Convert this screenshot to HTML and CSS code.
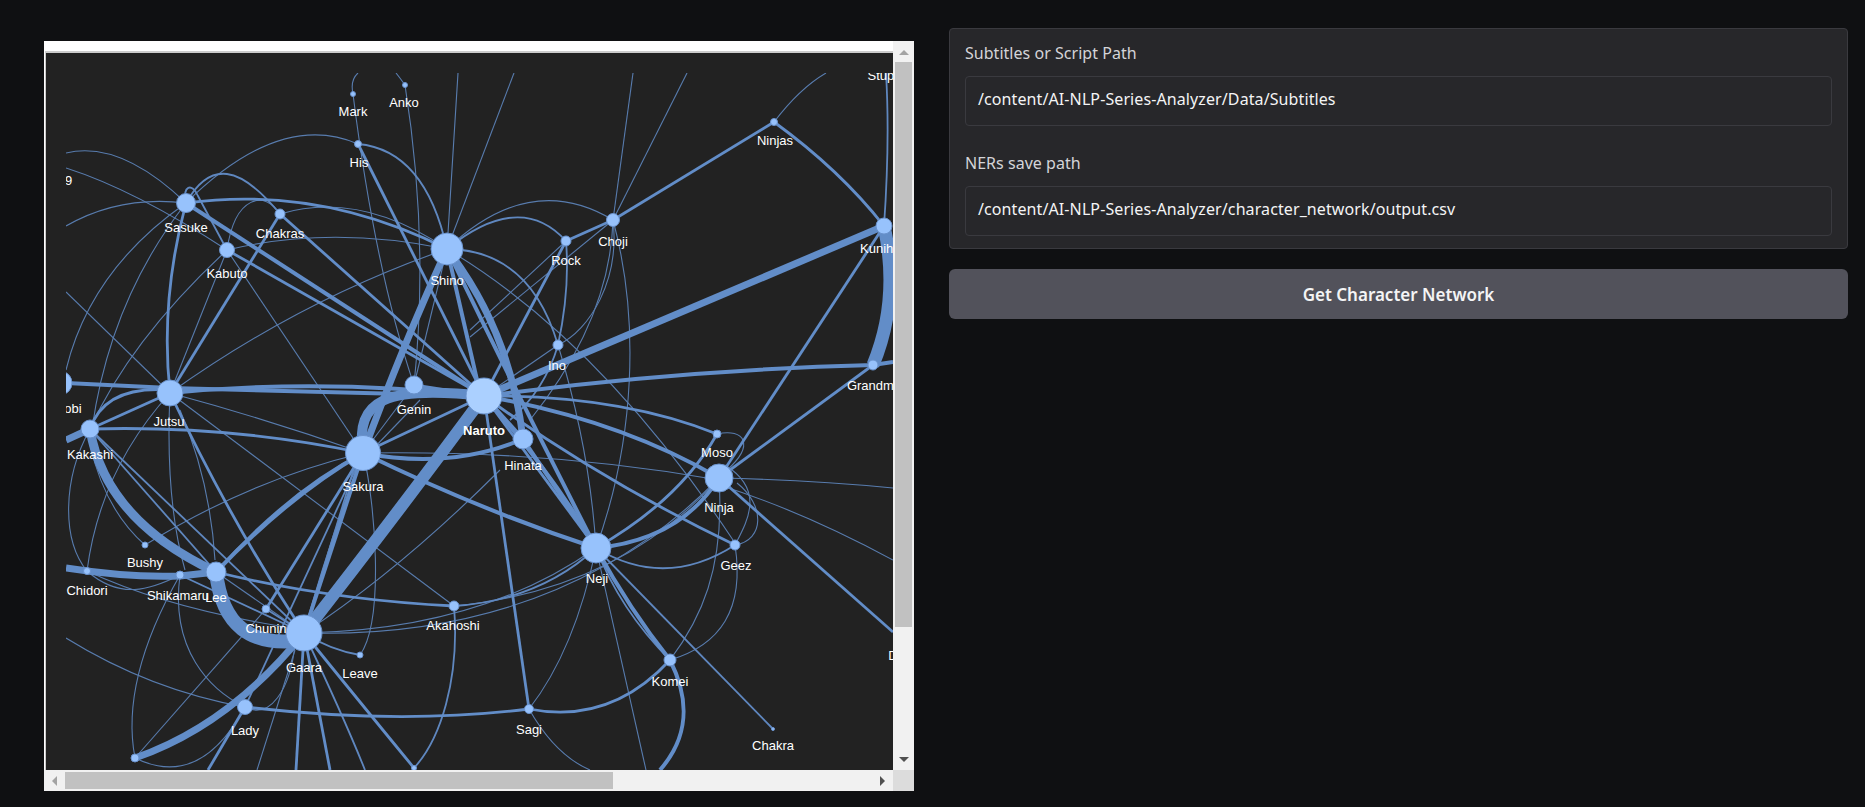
FILE: index.html
```html
<!DOCTYPE html>
<html lang="en">
<head>
    <meta charset="UTF-8">
    <title>Character Network</title>
    <link rel="stylesheet" href="styles.css">
</head>
<body>
<div class="page">

    <!-- Network iframe -->
    <div class="frame">
        <div class="viewport">
            <svg class="graph" width="827" height="697" viewBox="66 73 827 697">
                <!-- thin edges -->
                <g class="edges thin">
                    <path d="M353,94 Q350,80 358,73"/>
                    <path d="M353,94 Q375,270 414,385"/>
                    <path d="M405,85 Q400,78 396,73"/>
                    <path d="M405,85 C420,180 425,280 414,385"/>
                    <path d="M447,249 L458,73"/>
                    <path d="M447,249 L514,73"/>
                    <path d="M613,220 L633,73"/>
                    <path d="M613,220 L687,73"/>
                    <path d="M774,122 Q800,88 826,73"/>
                    <path d="M186,203 Q280,110 358,144"/>
                    <path d="M280,214 Q360,190 447,249"/>
                    <path d="M227,250 Q330,225 447,249"/>
                    <path d="M66,153 Q120,140 186,203"/>
                    <path d="M66,168 Q135,190 227,250"/>
                    <path d="M66,226 Q120,195 186,203"/>
                    <path d="M227,250 C235,195 265,190 280,214"/>
                    <path d="M227,250 L170,393"/>
                    <path d="M186,203 Q90,270 66,370"/>
                    <path d="M186,203 Q110,300 92,429"/>
                    <path d="M227,250 Q130,340 90,429"/>
                    <path d="M66,292 L170,393"/>
                    <path d="M227,250 L363,453"/>
                    <path d="M447,249 Q300,300 170,393"/>
                    <path d="M447,249 L414,385"/>
                    <path d="M447,249 Q530,170 613,220"/>
                    <path d="M613,220 L470,337"/>
                    <path d="M566,241 L470,330"/>
                    <path d="M613,220 Q610,320 530,420"/>
                    <path d="M613,220 C640,320 635,440 596,548"/>
                    <path d="M613,220 C620,280 590,330 558,345"/>
                    <path d="M558,345 L484,396"/>
                    <path d="M558,345 Q590,450 596,548"/>
                    <path d="M447,249 Q600,340 733,540"/>
                    <path d="M363,453 Q550,450 719,480"/>
                    <path d="M304,633 Q560,640 719,478"/>
                    <path d="M454,606 Q620,590 719,478"/>
                    <path d="M304,633 Q480,630 596,548"/>
                    <path d="M596,548 Q575,650 529,709"/>
                    <path d="M596,548 L646,770"/>
                    <path d="M717,434 C745,428 755,445 727,470"/>
                    <path d="M725,465 C765,490 748,520 735,545"/>
                    <path d="M737,483 C765,505 765,540 735,545"/>
                    <path d="M735,545 C745,610 720,645 670,660"/>
                    <path d="M719,478 C725,570 700,620 670,660"/>
                    <path d="M529,709 Q555,755 590,770"/>
                    <path d="M719,478 Q810,480 893,488"/>
                    <path d="M719,485 Q800,510 893,560"/>
                    <path d="M295,650 L257,770"/>
                    <path d="M245,707 C270,720 290,690 295,645"/>
                    <path d="M360,655 C385,620 375,500 363,453"/>
                    <path d="M170,393 Q165,500 185,570"/>
                    <path d="M180,410 Q210,480 215,560"/>
                    <path d="M90,429 C62,480 62,540 87,571"/>
                    <path d="M87,571 Q100,470 170,393"/>
                    <path d="M87,571 Q170,610 304,630"/>
                    <path d="M90,445 Q105,510 145,545"/>
                    <path d="M145,545 Q250,480 363,453"/>
                    <path d="M87,571 C120,600 150,590 180,575"/>
                    <path d="M180,575 C170,650 210,690 245,707"/>
                    <path d="M135,758 Q120,680 180,575"/>
                    <path d="M135,758 L266,609"/>
                    <path d="M135,758 Q200,790 245,707"/>
                    <path d="M66,638 Q150,690 245,707"/>
                    <path d="M170,393 Q270,420 363,453"/>
                    <path d="M454,606 L170,393"/>
                    <path d="M304,633 Q400,570 500,470"/>
                    <path d="M414,385 L363,453"/>
                    <path d="M420,400 L372,450"/>
                    <path d="M216,572 L304,633"/>
                </g>
                <!-- medium edges -->
                <g class="edges medium">
                    <path d="M358,144 Q425,150 447,249"/>
                    <path d="M186,203 C210,160 240,165 280,214"/>
                    <path d="M186,203 C182,186 192,182 198,196 L227,250"/>
                    <path d="M447,249 Q520,190 566,241"/>
                    <path d="M566,241 Q570,290 558,345 Q545,390 510,420"/>
                    <path d="M447,249 Q530,250 558,345"/>
                    <path d="M596,548 Q665,590 735,545"/>
                    <path d="M454,606 Q540,600 596,548"/>
                    <path d="M454,606 C460,680 440,740 414,768"/>
                    <path d="M596,548 L773,729"/>
                    <path d="M884,226 Q890,140 886,73"/>
                    <path d="M304,633 Q345,720 365,770"/>
                    <path d="M304,633 Q330,650 360,655"/>
                    <path d="M304,633 Q330,540 363,453"/>
                    <path d="M304,633 L355,465"/>
                    <path d="M90,429 L304,633"/>
                    <path d="M90,429 L216,572"/>
                    <path d="M180,575 L304,633"/>
                    <path d="M596,548 Q620,610 670,660"/>
                    <path d="M245,707 L363,453"/>
                    <path d="M266,609 L304,633"/>
                </g>
                <!-- wide edges -->
                <g class="edges wide">
                    <path d="M358,144 L484,396"/>
                    <path d="M186,203 Q320,185 447,249"/>
                    <path d="M280,214 L484,396"/>
                    <path d="M280,214 L170,393"/>
                    <path d="M186,203 Q160,300 170,393"/>
                    <path d="M227,250 L484,396"/>
                    <path d="M566,241 L484,396"/>
                    <path d="M566,241 L613,220"/>
                    <path d="M613,220 L774,122"/>
                    <path d="M774,122 Q840,170 884,226"/>
                    <path d="M719,478 L873,365"/>
                    <path d="M719,478 L884,226"/>
                    <path d="M719,478 L893,632"/>
                    <path d="M596,548 Q680,500 717,434"/>
                    <path d="M484,396 Q620,395 717,434"/>
                    <path d="M484,396 Q600,480 735,545"/>
                    <path d="M484,396 L529,709"/>
                    <path d="M529,709 Q610,725 670,660"/>
                    <path d="M245,707 Q400,725 529,709"/>
                    <path d="M216,572 Q330,600 454,606"/>
                    <path d="M304,633 L296,770"/>
                    <path d="M304,633 L330,770"/>
                    <path d="M304,633 Q350,690 414,768"/>
                    <path d="M245,707 L208,770"/>
                    <path d="M266,609 L363,453"/>
                    <path d="M170,393 Q230,520 304,633"/>
                    <path d="M90,429 Q230,425 363,453"/>
                    <path d="M90,429 L170,393"/>
                    <path d="M90,429 Q105,385 170,390"/>
                    <path d="M216,572 Q290,490 363,453"/>
                    <path d="M414,385 L484,396"/>
                    <path d="M363,453 L484,396"/>
                    <path d="M596,548 L484,396"/>
                </g>
                <!-- heavy edges -->
                <g class="edges heavy">
                    <path d="M447,249 L477,380"/>
                    <path d="M186,203 L484,396"/>
                    <path d="M363,453 Q290,495 216,572"/>
                    <path d="M66,383 L170,388"/>
                    <path d="M170,388 L484,396"/>
                    <path d="M170,393 Q320,378 484,396"/>
                    <path d="M484,396 Q680,370 873,365 L893,362"/>
                    <path d="M363,453 Q450,470 523,439"/>
                    <path d="M363,453 Q480,510 596,548"/>
                    <path d="M484,396 Q550,470 596,548"/>
                    <path d="M523,439 L596,548"/>
                    <path d="M447,249 Q520,400 596,548"/>
                    <path d="M596,548 Q630,610 670,660"/>
                    <path d="M596,548 Q680,540 719,478"/>
                    <path d="M484,396 Q620,420 719,478"/>
                    <path d="M670,660 C685,690 695,730 660,770"/>
                    <path d="M304,633 L363,453"/>
                    <path d="M484,396 L523,439"/>
                </g>
                <!-- thick edges -->
                <g class="edges thick">
                    <path d="M484,396 L884,226"/>
                    <path d="M447,249 Q405,340 363,453"/>
                    <path d="M447,249 Q510,330 523,439"/>
                    <path d="M66,440 L90,429"/>
                    <path d="M66,568 Q130,578 180,576 L216,572"/>
                    <path d="M304,633 Q230,725 135,758"/>
                </g>
                <g class="edges huge">
                    <path class="w9" d="M90,429 Q105,520 216,572"/>
                    <path class="w10" d="M363,453 C355,400 385,385 484,396"/>
                    <path class="w13" d="M884,226 Q900,300 873,365"/>
                    <path class="w12" d="M304,633 Q400,510 484,396"/>
                    <path class="w14" d="M216,572 C222,625 250,648 304,640"/>
                </g>

                <!-- nodes -->
                <g class="nodes">
                    <circle cx="353" cy="94" r="2.5"/>
                    <circle cx="405" cy="85" r="2.5"/>
                    <circle cx="358" cy="144" r="3.5"/>
                    <circle cx="186" cy="203" r="9.5"/>
                    <circle cx="280" cy="214" r="5"/>
                    <circle cx="227" cy="250" r="7.5"/>
                    <circle cx="447" cy="249" r="16"/>
                    <circle cx="170" cy="393" r="13"/>
                    <circle cx="414" cy="385" r="9"/>
                    <circle cx="60" cy="383" r="12"/>
                    <circle cx="613" cy="220" r="6.5"/>
                    <circle cx="566" cy="241" r="5"/>
                    <circle cx="558" cy="345" r="5"/>
                    <circle cx="774" cy="122" r="3.5"/>
                    <circle cx="884" cy="226" r="8"/>
                    <circle cx="873" cy="365" r="5"/>
                    <circle cx="90" cy="429" r="9"/>
                    <circle cx="363" cy="453" r="17.5"/>
                    <circle cx="145" cy="545" r="3"/>
                    <circle cx="87" cy="571" r="3.5"/>
                    <circle cx="180" cy="575" r="4"/>
                    <circle cx="216" cy="572" r="10"/>
                    <circle cx="266" cy="609" r="4"/>
                    <circle cx="304" cy="633" r="18"/>
                    <circle cx="360" cy="655" r="3"/>
                    <circle cx="454" cy="606" r="5"/>
                    <circle cx="245" cy="707" r="7.5"/>
                    <circle cx="135" cy="758" r="4"/>
                    <circle cx="414" cy="768" r="2.5"/>
                    <circle cx="523" cy="439" r="10"/>
                    <circle cx="717" cy="434" r="4"/>
                    <circle cx="719" cy="478" r="14"/>
                    <circle cx="596" cy="548" r="15"/>
                    <circle cx="735" cy="545" r="5"/>
                    <circle cx="670" cy="660" r="6"/>
                    <circle cx="529" cy="709" r="4.5"/>
                    <circle cx="773" cy="729" r="1.5"/>
                    <circle class="selected" cx="484" cy="396" r="18"/>
                </g>

                <!-- labels -->
                <g class="labels">
                    <text x="353" y="116">Mark</text>
                    <text x="404" y="107">Anko</text>
                    <text x="359" y="167">His</text>
                    <text x="186" y="232">Sasuke</text>
                    <text x="280" y="238">Chakras</text>
                    <text x="227" y="278">Kabuto</text>
                    <text x="447" y="285">Shino</text>
                    <text x="169" y="426">Jutsu</text>
                    <text x="414" y="414">Genin</text>
                    <text x="613" y="246">Choji</text>
                    <text x="566" y="265">Rock</text>
                    <text x="557" y="370">Ino</text>
                    <text x="775" y="145">Ninjas</text>
                    <text x="885" y="253">Kunihiko</text>
                    <text x="874" y="390">Grandma</text>
                    <text x="886" y="80">Stupid</text>
                    <text x="51" y="185">Team 9</text>
                    <text x="60" y="413">Shinobi</text>
                    <text x="90" y="459">Kakashi</text>
                    <text x="363" y="491">Sakura</text>
                    <text x="145" y="567">Bushy</text>
                    <text x="87" y="595">Chidori</text>
                    <text x="178" y="600">Shikamaru</text>
                    <text x="216" y="602">Lee</text>
                    <text x="266" y="633">Chunin</text>
                    <text x="304" y="672">Gaara</text>
                    <text x="360" y="678">Leave</text>
                    <text x="453" y="630">Akahoshi</text>
                    <text x="245" y="735">Lady</text>
                    <text x="523" y="470">Hinata</text>
                    <text x="717" y="457">Moso</text>
                    <text x="719" y="512">Ninja</text>
                    <text x="597" y="583">Neji</text>
                    <text x="736" y="570">Geez</text>
                    <text x="670" y="686">Komei</text>
                    <text x="529" y="734">Sagi</text>
                    <text x="773" y="750">Chakra</text>
                    <text x="907" y="660">Danzo</text>
                    <text class="bold" x="484" y="435">Naruto</text>
                </g>
            </svg>
        </div>

        <div class="scroll-v">
            <span class="arrow up"></span>
            <div class="thumb-v"></div>
            <span class="arrow down"></span>
        </div>
        <div class="scroll-h">
            <span class="arrow left"></span>
            <div class="thumb-h"></div>
            <span class="arrow right"></span>
        </div>
        <div class="corner"></div>
    </div>

    <!-- Form -->
    <div class="side">
        <div class="panel">
            <div class="field">
                <div class="field-label">Subtitles or Script Path</div>
                <div class="textbox">/content/AI-NLP-Series-Analyzer/Data/Subtitles</div>
            </div>
            <div class="field">
                <div class="field-label">NERs save path</div>
                <div class="textbox">/content/AI-NLP-Series-Analyzer/character_network/output.csv</div>
            </div>
        </div>
        <button class="run-btn">Get Character Network</button>
    </div>

</div>
</body>
</html>
```

FILE: styles.css
```css
* {
    box-sizing: border-box;
}

html, body {
    height: 100%;
}

body {
    margin: 0;
    background-color: #0f1012;
    font-family: "Noto Sans", Arial, sans-serif;
    overflow: hidden;
}

.page {
    display: flex;
    align-items: flex-start;
    gap: 35px;
    padding: 28px 17px 0 44px;
}

/* Iframe */
.frame {
    flex: none;
    width: 870px;
    height: 750px;
    margin-top: 13px;
    display: grid;
    grid-template-columns: 849px 21px;
    grid-template-rows: 729px 21px;
    background-color: #fff;
}

.viewport {
    margin: 10px 0 0 1px;
    padding: 20px 0 0 20px;
    background-color: #222;
    border-top: 2px solid #ccc;
    border-left: 1px solid #ccc;
    overflow: hidden;
}

.graph {
    display: block;
}

.edges {
    fill: none;
    stroke: #628dc8;
}
.thin { stroke: #587cae; stroke-width: 1.1; }
.medium { stroke: #5f87bf; stroke-width: 1.8; }
.wide { stroke-width: 2.8; }
.heavy { stroke-width: 4; }
.thick { stroke-width: 7; }
.w9 { stroke-width: 9; }
.w10 { stroke-width: 10; }
.w12 { stroke-width: 12; }
.w13 { stroke-width: 13; }
.w14 { stroke-width: 14; }

.nodes circle {
    fill: #97c2fc;
    stroke: #6a92cc;
    stroke-width: 1;
}
.nodes .selected {
    fill: #abd0ff;
}

.labels text {
    fill: #fff;
    font-family: "Liberation Sans", Arial, sans-serif;
    font-size: 13px;
    text-anchor: middle;
}
.labels .bold {
    font-weight: bold;
}

/* Scrollbars */
.scroll-v, .scroll-h {
    background-color: #f1f1f1;
    display: flex;
    align-items: center;
    justify-content: space-between;
}

.scroll-v {
    flex-direction: column;
    padding: 9px 2px 8px;
}

.scroll-h {
    padding: 2px 8px 2px 0;
}

.thumb-v {
    width: 17px;
    height: 565px;
    margin-top: 7px;
    margin-bottom: auto;
    background-color: #c1c1c1;
}

.thumb-h {
    width: 548px;
    height: 17px;
    margin-left: 8px;
    margin-right: auto;
    background-color: #c1c1c1;
}

.corner {
    background-color: #dcdcdc;
}

.arrow {
    flex: none;
    width: 0;
    height: 0;
    border-style: solid;
    border-color: transparent;
}
.arrow.up {
    border-width: 0 5px 5px;
    border-bottom-color: #a3a3a3;
}
.arrow.down {
    border-width: 5px 5px 0;
    border-top-color: #505050;
}
.arrow.left {
    margin-left: 8px;
    border-width: 5px 5px 5px 0;
    border-right-color: #a3a3a3;
}
.arrow.right {
    border-width: 5px 0 5px 5px;
    border-left-color: #505050;
}

/* Form */
.side {
    flex: 1;
    display: flex;
    flex-direction: column;
    gap: 20px;
}

.panel {
    display: flex;
    flex-direction: column;
    gap: 26px;
    padding: 13px 15px 12px;
    background-color: #27272a;
    border: 1px solid #3a3a3f;
    border-radius: 4px;
}

.field-label {
    height: 24px;
    margin-bottom: 10px;
    font-size: 16px;
    line-height: 23px;
    letter-spacing: 0.03px;
    color: #d4d4d8;
}

.textbox {
    height: 50px;
    padding: 0 12px;
    border: 1px solid #3a3a3f;
    border-radius: 4px;
    background-color: #27272a;
    color: #f4f4f5;
    font-size: 16px;
    letter-spacing: 0.1px;
    line-height: 45px;
}

.run-btn {
    height: 50px;
    border: none;
    border-radius: 6px;
    background-color: #52525b;
    color: #f4f4f5;
    font-family: inherit;
    font-size: 17px;
    font-weight: 600;
}
```
